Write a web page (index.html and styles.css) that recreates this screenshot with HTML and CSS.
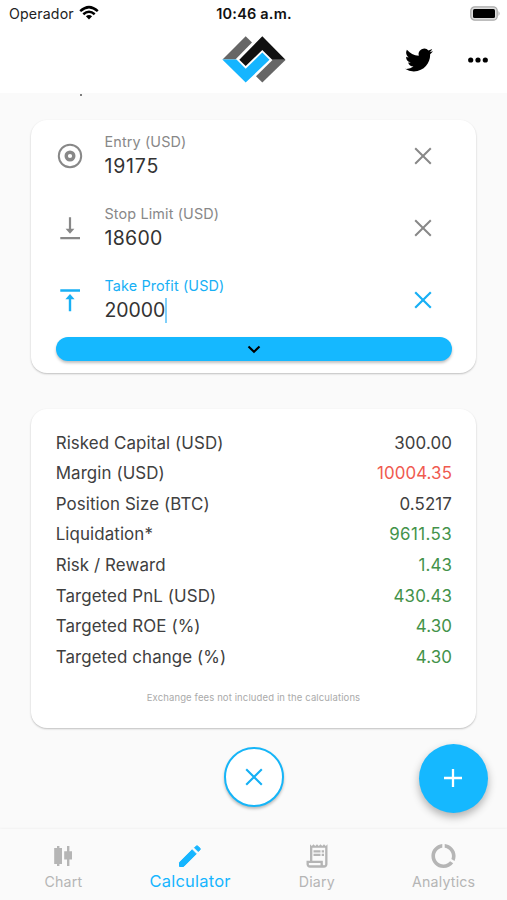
FILE: index.html
```html
<!DOCTYPE html>
<html lang="en">
<head>
<meta charset="utf-8">
<title>Calculator</title>
<link rel="stylesheet" href="styles.css">
</head>
<body>
<div class="app">
  <header class="header">
    <div class="status">
      <div class="carrier"><span>Operador</span>
        <svg width="20" height="16" viewBox="0 0 20 16" fill="none" stroke="#000" stroke-width="2.5"><path d="M1.2 6.2Q10-2 18.8 6.2"/><path d="M4.3 9.3Q10 4.2 15.7 9.3"/><path d="M6.9 11.2Q10 8.6 13.1 11.2L10 14.4Z" fill="#000" stroke="none"/></svg>
      </div>
      <div class="time">10:46 a.m.</div>
      <svg class="battery" width="31" height="16" viewBox="0 0 31 16"><rect x=".8" y=".8" width="26.4" height="13.4" rx="4" fill="#ddd" stroke="#aaa" stroke-width="1.3"/><rect x="3" y="3" width="22" height="9" rx="1.5" fill="#000"/><path d="M28.5 5q2.2 2.5 0 5z" fill="#aaa"/></svg>
    </div>
    <div class="bar">
      <svg class="logo" width="64" height="48" viewBox="222 36 64 48"><path fill="#666" d="M222.5 59.5 245.7 36.3 252 42.6 235.4 59.5Z"/><path fill="#666" d="M285.5 60 262.3 82.6 256 76.3 272.5 60Z"/><path fill="#111" d="M262.3 36.3 285.5 59.8H272.2L262.3 50 245.7 66 239.3 59.7Z"/><path fill="#15b5ff" d="M222.3 59.5H236.5L245.7 68.8 262.3 52.6 269.5 59.7 245.7 82.6Z"/></svg>
      <svg class="bird" width="28" height="28" viewBox="0 0 24 24"><path d="M23.95 4.57a10 10 0 0 1-2.82.77 4.96 4.96 0 0 0 2.16-2.72c-.95.55-2 .95-3.13 1.18a4.92 4.92 0 0 0-8.38 4.48C7.69 8.1 4.07 6.13 1.64 3.16a4.82 4.82 0 0 0-.67 2.48c0 1.71.87 3.21 2.19 4.1a4.9 4.9 0 0 1-2.23-.62v.06a4.92 4.92 0 0 0 3.95 4.83 5 5 0 0 1-2.21.08 4.94 4.94 0 0 0 4.6 3.42A9.87 9.87 0 0 1 0 19.54a14 14 0 0 0 7.55 2.21c9.05 0 14-7.5 14-13.99 0-.21 0-.42-.02-.63a9.94 9.94 0 0 0 2.46-2.55z"/></svg>
      <svg class="more" width="20" height="6" viewBox="0 0 20 6"><circle cx="2.7" cy="3" r="2.6"/><circle cx="10" cy="3" r="2.6"/><circle cx="17.3" cy="3" r="2.6"/></svg>
    </div>
  </header>
  <main class="main">
    <div class="scrolled"></div>
    <section class="card inputs">
      <div class="field">
        <svg width="28" height="28" viewBox="0 0 28 28" fill="none" stroke="currentColor"><circle cx="14" cy="14" r="11.2" stroke-width="2"/><circle cx="14" cy="14" r="3.8" stroke-width="3.4"/></svg>
        <div class="text"><div class="label">Entry (USD)</div><div class="value loose">19175</div></div>
        <svg width="18" height="18" viewBox="0 0 18 18" fill="none" stroke="currentColor" stroke-width="2"><path d="M1.2 1.2 16.8 16.8M16.8 1.2 1.2 16.8"/></svg>
      </div>
      <div class="field">
        <svg width="28" height="28" viewBox="0 0 28 28" fill="none" stroke="currentColor" stroke-width="2.2"><path d="M14 3.3V16M4.3 24.2H24"/><path d="M9.6 14.8h8.8L14 19.8Z" fill="currentColor" stroke="none"/></svg>
        <div class="text"><div class="label">Stop Limit (USD)</div><div class="value">18600</div></div>
        <svg width="18" height="18" viewBox="0 0 18 18" fill="none" stroke="currentColor" stroke-width="2"><path d="M1.2 1.2 16.8 16.8M16.8 1.2 1.2 16.8"/></svg>
      </div>
      <div class="field active">
        <svg width="28" height="28" viewBox="0 0 28 28" fill="none" stroke="currentColor" stroke-width="2.4"><path d="M14 25.2V12M4.3 4.5H24"/><path d="M9.4 13.2h9.2L14 8Z" fill="currentColor" stroke="none"/></svg>
        <div class="text"><div class="label">Take Profit (USD)</div><div class="value tight">20000<span class="caret"></span></div></div>
        <svg width="18" height="18" viewBox="0 0 18 18" fill="none" stroke="currentColor" stroke-width="2.2"><path d="M1.2 1.2 16.8 16.8M16.8 1.2 1.2 16.8"/></svg>
      </div>
      <div class="expand"><svg width="14" height="9" viewBox="0 0 14 9" fill="none" stroke="#000" stroke-width="2.1"><path d="M1.5 1.5 7 6.8 12.5 1.5"/></svg></div>
    </section>
    <section class="card results">
      <div class="row"><span>Risked Capital (USD)</span><span class="num">300.00</span></div>
      <div class="row"><span>Margin (USD)</span><span class="num red">10004.35</span></div>
      <div class="row"><span>Position Size (BTC)</span><span class="num">0.5217</span></div>
      <div class="row"><span>Liquidation*</span><span class="num spaced green">9611.53</span></div>
      <div class="row"><span>Risk / Reward</span><span class="num green">1.43</span></div>
      <div class="row"><span>Targeted PnL (USD)</span><span class="num green">430.43</span></div>
      <div class="row"><span>Targeted ROE (%)</span><span class="num green">4.30</span></div>
      <div class="row"><span>Targeted change (%)</span><span class="num green">4.30</span></div>
      <div class="note">Exchange fees not included in the calculations</div>
    </section>
    <div class="actions">
      <div class="clear"><svg width="18" height="18" viewBox="0 0 18 18" fill="none" stroke="currentColor" stroke-width="2.1"><path d="M1.2 1.2 16.8 16.8M16.8 1.2 1.2 16.8"/></svg></div>
      <div class="add"><svg width="18" height="18" viewBox="0 0 18 18" fill="none" stroke="#fff" stroke-width="2.3"><path d="M9 0V18M0 9H18"/></svg></div>
    </div>
  </main>
  <nav class="nav">
    <div class="tab"><svg width="26" height="26" viewBox="0 0 26 26" fill="currentColor"><path d="M7 3h2.400v2H12v16H9.400v2H7v-2H4.200V5H7zM17 3h2.400v5.200H22v8.400h-2.600V23H17v-6.400h-2.800V8.200H17z"/></svg><span>Chart</span></div>
    <div class="tab selected"><svg width="30" height="30" viewBox="0 0 24 24" fill="currentColor"><path d="M3.600 17.100v3.300h3.300L17 10.300 13.700 7zM19.900 7.100a1 1 0 0 0 0-1.400l-1.600-1.600a1 1 0 0 0-1.400 0L15.600 5.400l3 3z" stroke="currentColor" stroke-width=".8" stroke-linejoin="round"/></svg><span>Calculator</span></div>
    <div class="tab"><svg width="28" height="28" viewBox="0 0 24 24" fill="currentColor"><path d="m19.500 3.500-1.500-1.500-1.500 1.500L15 2l-1.500 1.500L12 2l-1.500 1.500L9 2 7.500 3.500 6 2v14H3v3c0 1.660 1.340 3 3 3h12c1.660 0 3-1.340 3-3V2zM15 20H6c-.55 0-1-.45-1-1v-1h10zm4-1c0 .55-.45 1-1 1s-1-.45-1-1v-3H8V5h11z"/><path d="M9 7h6v2H9zM16 7h2v2h-2zM9 10h6v2H9zM16 10h2v2h-2z"/></svg><span>Diary</span></div>
    <div class="tab"><svg width="29" height="29" viewBox="0 0 24 24" fill="currentColor"><path d="M13 2.050v3.030c3.390.49 6 3.390 6 6.920 0 .9-.18 1.750-.48 2.540l2.600 1.530c.56-1.240.88-2.620.88-4.070 0-5.180-3.950-9.450-9-9.950zM12 19c-3.870 0-7-3.130-7-7 0-3.530 2.610-6.430 6-6.920V2.050c-5.060.5-9 4.760-9 9.950 0 5.520 4.470 10 9.990 10 3.310 0 6.240-1.610 8.060-4.090l-2.600-1.530C16.170 17.980 14.210 19 12 19z"/></svg><span>Analytics</span></div>
  </nav>
</div>
</body>
</html>
```
FILE: styles.css
```css
* { box-sizing: border-box; }
body { margin: 0; font-family: Inter, "Liberation Sans", sans-serif; color: #404040; background: #fafafa; }
svg { display: block; flex: none; }
.app { width: 507px; height: 900px; display: flex; flex-direction: column; overflow: hidden; }
.header { height: 93px; background: #fff; flex: none; }
.status { height: 28px; display: grid; grid-template-columns: 1fr 1fr 1fr; align-items: center; padding: 0 6px 0 9px; }
.carrier { display: flex; align-items: center; gap: 5px; font-size: 14.2px; letter-spacing: .15px; color: #222; line-height: 16px; margin-top: -1px; }
.carrier svg { margin-top: -2px; }
.time { text-align: center; font-size: 14.5px; font-weight: 600; color: #111; letter-spacing: .2px; margin: -1px 2px 0 0; }
.battery { justify-self: end; margin-top: -1px; }
.bar { height: 64px; display: flex; align-items: center; padding: 0 19px 0 222px; }
.bird { margin-left: 118.5px; }
.more { margin-left: auto; }
.main { flex: 1; display: flex; flex-direction: column; padding: 0 31px; }
.scrolled { width: 2px; height: 2px; margin: 1px 0 24px 49px; background: #555; border-radius: 1px; }
.card { background: #fff; border-radius: 16px; box-shadow: 0 1px 2px rgba(0,0,0,.24); padding: 0 24px; flex: none; }
.inputs { height: 253px; }
.field { height: 72px; display: flex; align-items: center; padding-right: 20px; color: #888; }
.field > svg:first-child { margin-left: 1px; }
.text { flex: 1; margin-left: 20.5px; }
.label { font-size: 14.4px; line-height: 20px; letter-spacing: .13px; }
.value { font-size: 19.5px; line-height: 28px; color: #333; display: flex; align-items: center; letter-spacing: .3px; }
.loose { letter-spacing: .8px; }
.tight { letter-spacing: -.1px; }
.active { color: #18b0f5; }
.caret { width: 2px; height: 25px; background: #7fd0fa; }
.expand { height: 24px; margin: 1px 0 0 .5px; border-radius: 12px; background: #15b8ff; display: flex; align-items: center; justify-content: center; box-shadow: 0 2px 3px rgba(0,0,0,.25); }
.results { height: 319px; margin-top: 36px; padding-top: 18.4px; }
.row { height: 30.6px; display: flex; justify-content: space-between; align-items: center; font-size: 16.9px; letter-spacing: .1px; padding-left: .7px; }
.num { letter-spacing: .1px; }
.spaced { letter-spacing: .4px; }
.red { color: #f05a50; }
.green { color: #43924a; }
.note { text-align: center; font-size: 9.5px; letter-spacing: .12px; line-height: 14px; margin-top: 19px; color: #aaa; }
.actions { display: grid; grid-template-columns: 193px 60px 1fr; align-items: center; height: 68px; margin: 16px -12px 0 0; }
.clear { grid-column: 2; width: 60px; height: 60px; margin-top: -3px; border: 2.5px solid #15b5f8; border-radius: 50%; background: #fff; color: #15b0f5; display: flex; align-items: center; justify-content: center; box-shadow: 0 2px 3px rgba(0,0,0,.25); }
.add { justify-self: end; width: 69px; height: 69px; border-radius: 50%; background: #15b8ff; display: flex; align-items: center; justify-content: center; box-shadow: 0 4px 8px rgba(0,0,0,.3); padding: 0 1px 1px 0; }
.nav { height: 71px; flex: none; display: grid; grid-template-columns: repeat(4, 1fr); box-shadow: 0 -1px 2px rgba(0,0,0,.035); background: #fafafa; }
.tab { display: flex; flex-direction: column; align-items: center; color: #b5b5b5; font-size: 14.2px; padding-top: 12px; }
.tab svg { height: 30px; }
.tab span { line-height: 20px; margin-top: 1px; letter-spacing: .2px; }
.selected { color: #15b5ff; font-size: 16.5px; }
.selected span { margin-top: 0; }
```
